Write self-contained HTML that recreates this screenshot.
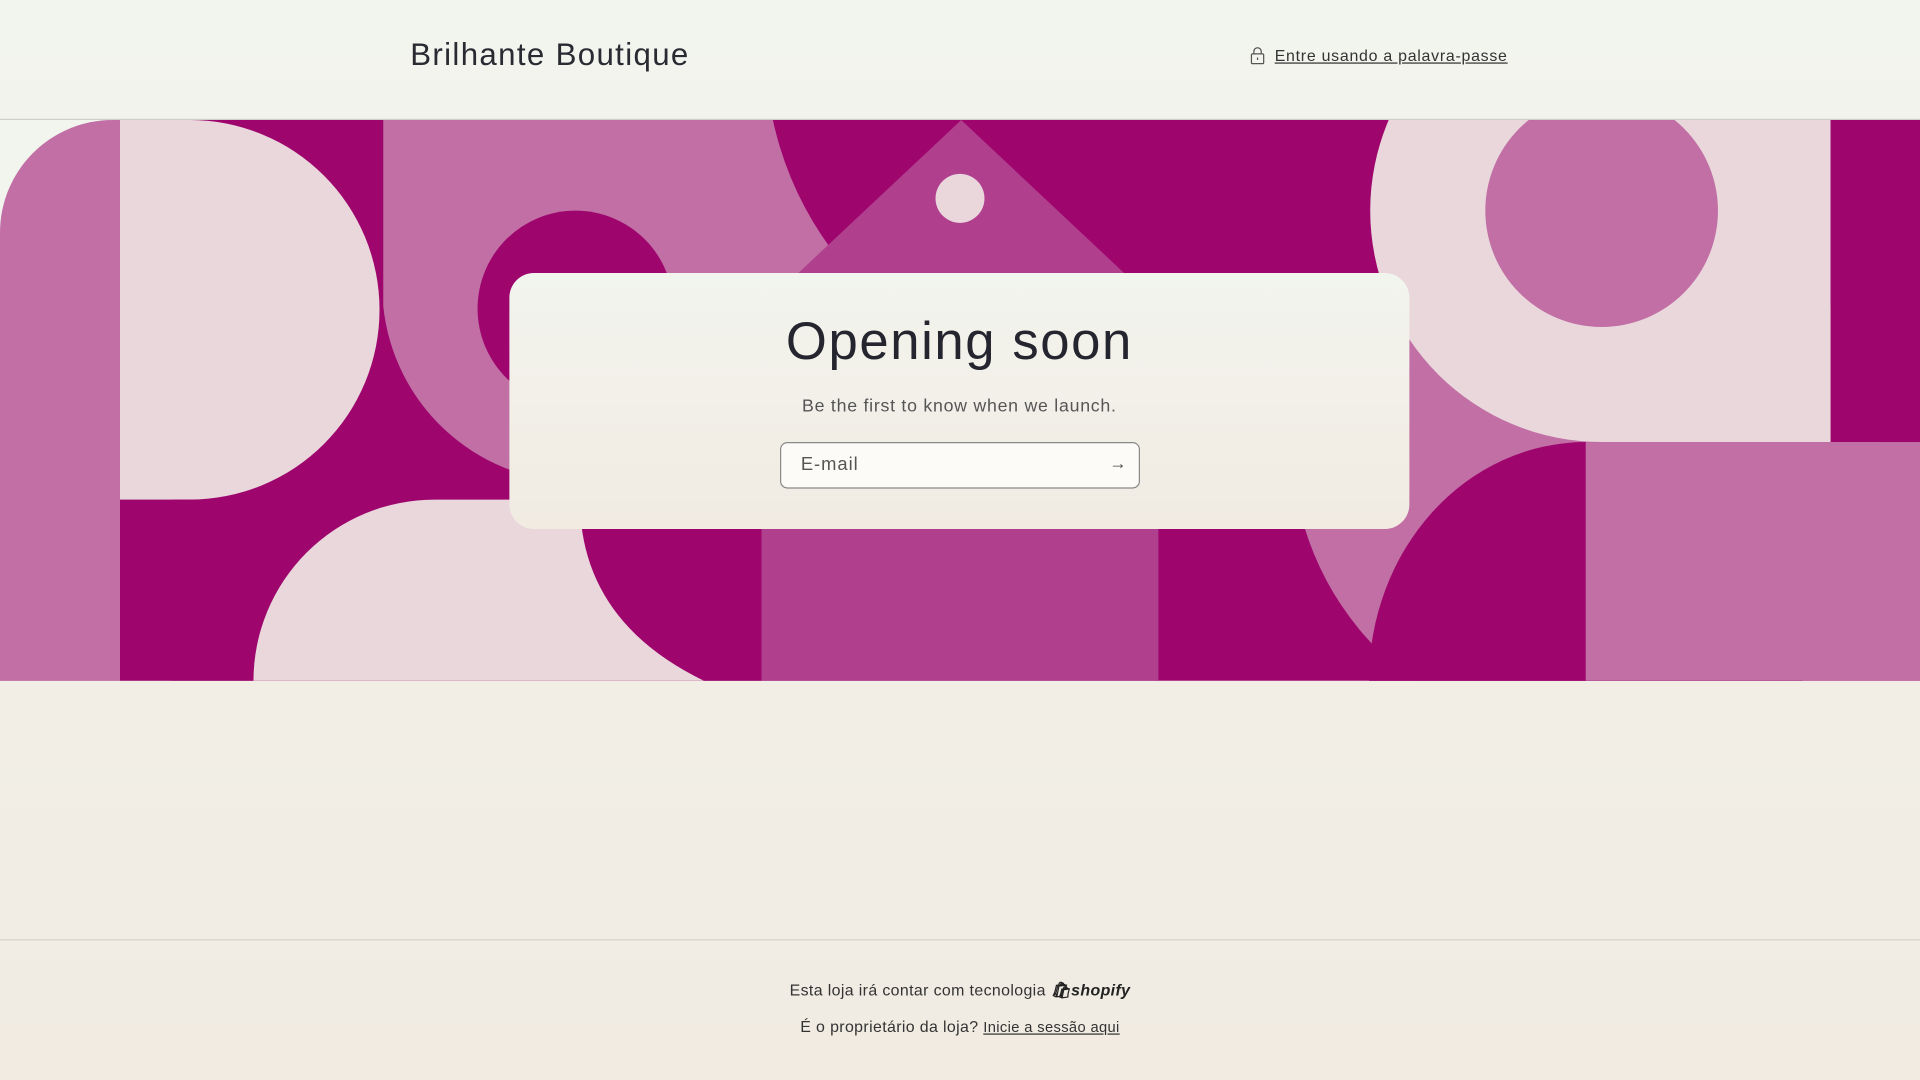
<!DOCTYPE html>
<html><head><meta charset="utf-8"><style>
html,body{margin:0;padding:0;width:1920px;height:1080px;overflow:hidden;}
#w{width:1568px;height:882px;transform:scale(1.22449);transform-origin:0 0;position:relative;
background:linear-gradient(180deg,#F2F4EE 0%,#F1EBE2 100%);font-family:"Liberation Sans",sans-serif;color:#2a2a33;}
.hdr{position:absolute;left:0;top:0;width:1568px;height:98px;border-bottom:1px solid #cfd0cc;box-sizing:border-box;}
.logo{position:absolute;left:335px;top:31px;font-size:25.5px;letter-spacing:1.1px;color:#2a2a33;}
.pw{position:absolute;left:1021px;top:38px;font-size:13px;color:#333;}
.pw span{text-decoration:underline;margin-left:8px;letter-spacing:.6px}
.card{position:absolute;left:416px;top:223px;width:735px;height:209px;border-radius:20px;
background:linear-gradient(180deg,#F2F4EE,#F1EBE2);text-align:center;}
.card h1{margin:0;position:absolute;top:32px;width:100%;font-size:43px;font-weight:400;letter-spacing:1.3px;color:#25252f}
.card p{margin:0;position:absolute;top:101px;width:100%;font-size:14.5px;color:#555;letter-spacing:.6px}
.inp{position:absolute;left:221px;top:138px;width:294px;height:38px;box-sizing:border-box;border:1px solid #8a8a8a;border-radius:6px;background:#FCFBF7;text-align:left;}
.inp span{position:absolute;left:16px;top:9px;font-size:15px;color:#555;letter-spacing:.8px}
.inp b{position:absolute;right:10px;top:8px;font-weight:400;font-size:14px;color:#444}
.ftl{position:absolute;left:0;top:767px;width:1568px;border-top:1px solid #d5d3cc}
.f1{position:absolute;top:801px;width:1568px;text-align:center;font-size:13px;color:#333;letter-spacing:.3px}
.f2{position:absolute;top:831px;width:1568px;text-align:center;font-size:13px;color:#333;letter-spacing:.3px}
</style></head><body><div id="w">
<div class="hdr"><div class="logo">Brilhante Boutique</div>
<div class="pw"><svg width="12" height="15" viewBox="0 0 12 15" style="vertical-align:-3px"><rect x="1" y="6" width="10" height="8" rx="1" fill="none" stroke="#555"/><path d="M3 6V4a3 3 0 0 1 6 0v2" fill="none" stroke="#555"/><path d="M6 9v2" stroke="#555"/></svg><span>Entre usando a palavra-passe</span></div></div>
<svg style="position:absolute;left:0;top:98px" width="1568" height="458" viewBox="0 98 1568 458">
<defs><clipPath id="c1"><rect x="0" y="250" width="1568" height="306"/></clipPath></defs>
<rect x="0" y="98" width="1568" height="458" fill="#9E066E"/>
<rect x="0" y="98" width="140" height="458" fill="#F2F4EE"/>
<path d="M0 190 A92 92 0 0 1 92 98 L98 98 L98 556 L0 556 Z" fill="#C16FA5"/>
<path d="M313 98 L720 98 L720 250 L630 260 A160 160 0 0 1 313 250 Z" fill="#C16FA5"/>
<path d="M98 98 L155 98 A155 155 0 0 1 155 408 L98 408 Z" fill="#E9D7DB"/>
<circle cx="470" cy="252" r="80" fill="#9E066E"/>
<circle cx="900" cy="40" r="275" fill="#9E066E"/>
<path d="M785 98 L1000 300 L570 300 Z" fill="#B03F8D"/>
<circle cx="784" cy="162" r="20" fill="#E9D7DB"/>
<circle cx="1295" cy="361" r="240" fill="#C16FA5" clip-path="url(#c1)"/>
<path d="M1308 98 L1495 98 L1495 361 L1308 361 A189 189 0 0 1 1308 -17 Z" fill="#E9D7DB"/>
<rect x="1495" y="98" width="73" height="263" fill="#9E066E"/>
<circle cx="1308" cy="172" r="95" fill="#C16FA5"/>
<ellipse cx="1295" cy="556" rx="177" ry="195" fill="#9E066E"/>
<rect x="1295" y="361" width="273" height="195" fill="#C16FA5"/>
<rect x="98" y="408" width="524" height="148" fill="#9E066E"/>
<path d="M207 556 A148 148 0 0 1 355 408 L622 408 L622 556 Z" fill="#E9D7DB"/>
<path d="M474 400 L622 400 L622 556 L575 556 Q480 510 474 420 Z" fill="#9E066E"/>
<rect x="622" y="420" width="324" height="136" fill="#B03F8D"/>
</svg>
<div class="card"><h1>Opening soon</h1><p>Be the first to know when we launch.</p>
<div class="inp"><span>E-mail</span><b>→</b></div></div>
<div class="ftl"></div>
<div class="f1">Esta loja irá contar com tecnologia <b style="font-style:italic;font-weight:700;color:#222">&#128717;shopify</b></div>
<div class="f2">É o proprietário da loja? <span style="text-decoration:underline;font-size:12px">Inicie a sessão aqui</span></div>
</div></body></html>
